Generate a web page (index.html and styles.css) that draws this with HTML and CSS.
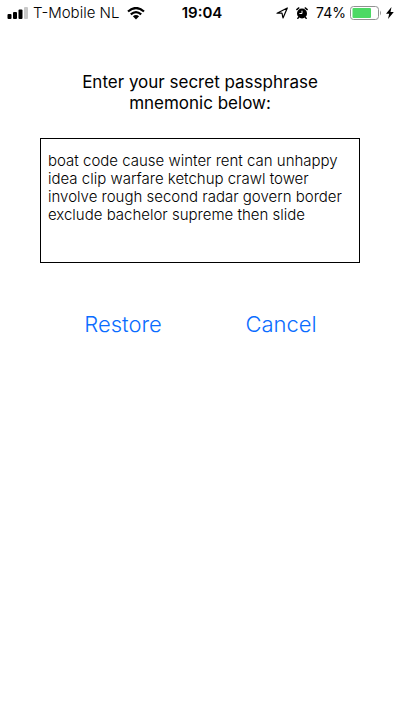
FILE: index.html
```html
<!DOCTYPE html>
<html lang="en">
<head>
<meta charset="utf-8">
<meta name="viewport" content="width=device-width, initial-scale=1">
<title>Restore wallet</title>
<link rel="stylesheet" href="styles.css">
</head>
<body>
<header class="status">
  <div class="status-side">
    <svg class="signal" width="21" height="12" viewBox="0 0 21 12" aria-hidden="true">
      <rect x="0.500" y="7" width="4" height="5" rx="1"/>
      <rect x="6" y="5" width="4" height="7" rx="1"/>
      <rect x="11.500" y="2.500" width="4" height="9.500" rx="1"/>
      <rect class="dim" x="17" y="0" width="4" height="12" rx="1"/>
    </svg>
    <span class="carrier">T-Mobile NL</span>
    <svg class="wifi" width="18" height="13" viewBox="0 0 18 13" aria-hidden="true">
      <path d="M1 4.500Q9-2.500 17 4.500M3.800 7.300Q9 2.900 14.200 7.300" fill="none" stroke="#000" stroke-width="2.200"/>
      <path d="M5.900 9.300Q9 6.700 12.100 9.300L9 12.500Z"/>
    </svg>
  </div>
  <time class="clock">19:04</time>
  <div class="status-side status-end">
    <svg class="location" width="12" height="12" viewBox="0 0 12 12" aria-hidden="true">
      <path d="M11.300 1L7 11L6 6.200L1 6.200Z" fill="none" stroke="#000" stroke-width="1.200" stroke-linejoin="round"/>
    </svg>
    <svg class="alarm" width="12" height="12" viewBox="0 0 12 12" aria-hidden="true">
      <circle cx="6" cy="6.500" r="5"/>
      <path d="M.8 2.600L2.800 .9M11.200 2.600L9.200 .9M2.500 10.500L1.800 11.400M9.500 10.500L10.200 11.400" fill="none" stroke="#000" stroke-width="1.400" stroke-linecap="round"/>
      <path d="M3.400 6.500H6V3.700" fill="none" stroke="#fff"/>
    </svg>
    <span class="percent">74%</span>
    <svg class="battery" width="32" height="14" viewBox="0 0 32 14" aria-hidden="true">
      <rect x=".5" y=".5" width="28" height="13" rx="3" fill="#fff" stroke="#929292"/>
      <rect x="2.500" y="2" width="18.500" height="10" rx="1" fill="#4cd964"/>
      <path d="M30 4.500Q32 7 30 9.500Z" fill="#929292"/>
    </svg>
    <svg class="bolt" width="8" height="12" viewBox="0 0 8 12" aria-hidden="true">
      <path d="M5.500 0L0 6.800H3.200L2 12L7.800 5H4.500Z"/>
    </svg>
  </div>
</header>
<main class="restore">
  <form class="form">
    <label class="prompt" for="phrase">Enter your secret passphrase mnemonic below:</label>
    <textarea class="phrase" id="phrase" spellcheck="false">boat code cause winter rent can unhappy idea clip warfare ketchup crawl tower involve rough second radar govern border exclude bachelor supreme then slide</textarea>
    <div class="actions">
      <button class="action" type="button">Restore</button>
      <button class="action" type="button">Cancel</button>
    </div>
  </form>
</main>
</body>
</html>
```
FILE: styles.css
```css
* {
  box-sizing: border-box;
}

body {
  margin: 0;
  background: #fff;
  color: #000;
  font-family: Inter, "Liberation Sans", sans-serif;
}

.status {
  display: grid;
  grid-template-columns: 1fr auto 1fr;
  align-items: center;
  height: 26px;
  padding: 0 6px 0 7px;
  font-size: 15px;
  line-height: 20px;
}

.status-side {
  display: flex;
  align-items: center;
}

.status-end {
  justify-content: flex-end;
}

.dim {
  fill: #c8c8c8;
}

.carrier {
  margin: 0 8px 0 5px;
  font-size: 15px;
  font-weight: 350;
}

.clock {
  padding-left: 3px;
  font-size: 15px;
  font-weight: 600;
}

.alarm {
  margin: 0 8px;
}

.percent {
  margin-right: 4px;
  font-size: 14px;
}

.bolt {
  margin-left: 4px;
}

.restore {
  padding: 46px 40px;
}

.form {
  display: flex;
  flex-direction: column;
}

.prompt {
  padding: 0 32px;
  font-size: 17px;
  line-height: 21px;
  text-align: center;
}

.phrase {
  width: 100%;
  height: 125px;
  margin: 24px 0 0;
  padding: 13px 7px;
  border: 1px solid #000;
  border-radius: 0;
  outline: 0;
  resize: none;
  background: #fff;
  color: #000;
  font-family: inherit;
  font-size: 15px;
  font-weight: 350;
  line-height: 18px;
}

.actions {
  display: grid;
  grid-template-columns: 1fr 1fr;
  margin-top: 45px;
  padding-left: 4px;
}

.action {
  padding: 0;
  border: 0;
  background: none;
  color: #0a6cff;
  font-family: inherit;
  font-size: 22px;
  font-weight: 350;
  line-height: 32px;
}
```
